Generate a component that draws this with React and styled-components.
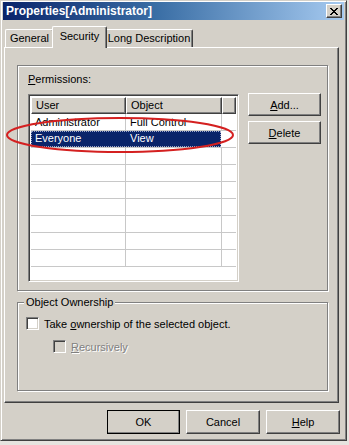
import styled, { createGlobalStyle } from 'styled-components';

const GlobalStyle = createGlobalStyle`
    html, body {
        margin: 0;
        padding: 0;
        background: #e6e4df;
    }
    * {
        box-sizing: border-box;
    }
`;

const FACE = '#d4d0c8';
const SHADOW = '#808080';
const DARK = '#404040';

const raised = `
    border-top: 1px solid #fff;
    border-left: 1px solid #fff;
    border-right: 1px solid ${DARK};
    border-bottom: 1px solid ${DARK};
    box-shadow: inset -1px -1px ${SHADOW};
`;

const sunken = `
    border-top: 1px solid ${SHADOW};
    border-left: 1px solid ${SHADOW};
    border-right: 1px solid #fff;
    border-bottom: 1px solid #fff;
    box-shadow: inset 1px 1px ${DARK}, inset -1px -1px ${FACE};
`;

const Window = styled.div`
    position: relative;
    width: 347px;
    height: 441px;
    background: ${FACE};
    border-top: 1px solid ${FACE};
    border-left: 1px solid ${FACE};
    border-right: 1px solid ${DARK};
    border-bottom: 1px solid ${DARK};
    box-shadow: inset 1px 1px #fff, inset -1px -1px ${SHADOW};
    padding: 1px 2px 2px 2px;
    font-family: 'Liberation Sans', Arial, sans-serif;
    font-size: 11px;
    color: #000;
    display: flex;
    flex-direction: column;
`;

const TitleBar = styled.div`
    height: 18px;
    display: flex;
    align-items: center;
    justify-content: space-between;
    padding: 0 2px 0 3px;
    background: linear-gradient(to right, #0a246a 0%, #3a6ea5 45%, #a6caf0 100%);
    color: #fff;
    font-weight: bold;
    font-size: 12px;
`;

const CloseButton = styled.div`
    width: 16px;
    height: 14px;
    background: ${FACE};
    ${raised}
    display: flex;
    align-items: center;
    justify-content: center;
`;

const TabStrip = styled.div`
    display: flex;
    align-items: flex-end;
    height: 27px;
    padding-left: 2px;
    position: relative;
    z-index: 1;
`;

const Tab = styled.div`
    width: ${(p) => p.$w}px;
    height: ${(p) => (p.$active ? 22 : 18)}px;
    margin: ${(p) => (p.$active ? '0 -2px -1px -2px' : '0')};
    padding-top: ${(p) => (p.$active ? 3 : 2)}px;
    text-align: center;
    background: ${FACE};
    border-top: 1px solid #fff;
    border-left: 1px solid #fff;
    border-right: 1px solid ${DARK};
    border-radius: 2px 2px 0 0;
    box-shadow: inset -1px 0 ${SHADOW};
    position: relative;
    z-index: ${(p) => (p.$active ? 2 : 0)};
`;

const TabPanel = styled.div`
    width: 335px;
    height: 356px;
    margin-left: 1px;
    border-top: 1px solid #fff;
    border-left: 1px solid #fff;
    border-right: 1px solid ${DARK};
    border-bottom: 1px solid ${DARK};
    box-shadow: inset -1px -1px ${SHADOW};
    padding: 17px 10px 0 12px;
    display: flex;
    flex-direction: column;
    gap: 11px;
`;

const GroupBox = styled.div`
    position: relative;
    height: ${(p) => p.$h}px;
    border: 1px solid ${SHADOW};
    box-shadow: inset 1px 1px #fff, 1px 1px #fff;
    padding: ${(p) => p.$pad};
`;

const Legend = styled.span`
    position: absolute;
    top: -7px;
    left: 6px;
    padding: 0 2px;
    background: ${FACE};
`;

const PermRow = styled.div`
    display: flex;
    align-items: flex-start;
    gap: 9px;
`;

const PermLabel = styled.div`
    height: 14px;
    margin-bottom: 7px;
`;

const ListView = styled.div`
    width: 211px;
    height: 188px;
    background: #fff;
    ${sunken}
    padding: 2px;
    overflow: hidden;
`;

const HeaderRow = styled.div`
    display: flex;
    height: 17px;
`;

const HeaderCell = styled.div`
    width: ${(p) => p.$w}px;
    flex: ${(p) => (p.$fill ? 1 : 'none')};
    background: ${FACE};
    ${raised}
    padding: 1px 0 0 4px;
`;

const Row = styled.div`
    display: flex;
    height: 17px;
    border-bottom: 1px solid #c8c8c8;
`;

const Cell = styled.div`
    width: ${(p) => p.$w}px;
    flex: ${(p) => (p.$fill ? 1 : 'none')};
    border-right: 1px solid #c8c8c8;
    padding: 2px 0 0 4px;
    white-space: nowrap;
    overflow: hidden;
`;

const Selection = styled.div`
    display: flex;
    width: 190px;
    height: 16px;
    background: #0a246a;
    color: #fff;
    outline: 1px dotted #a0a8c8;
    outline-offset: -1px;
`;

const SelCell = styled.div`
    width: ${(p) => p.$w}px;
    padding: 1px 0 0 4px;
`;

const ButtonColumn = styled.div`
    display: flex;
    flex-direction: column;
    gap: 5px;
    margin-top: -1px;
`;

const Button = styled.div`
    width: ${(p) => p.$w}px;
    height: ${(p) => p.$h || 23}px;
    background: ${FACE};
    ${raised}
    display: flex;
    align-items: center;
    justify-content: center;
    ${(p) =>
        p.$default &&
        `outline: 1px solid #000; outline-offset: -1px; border-color: #fff ${DARK} ${DARK} #fff;`}
`;

const U = styled.span`
    text-decoration: underline;
`;

const CheckRow = styled.div`
    display: flex;
    align-items: center;
    gap: 5px;
    margin-left: ${(p) => p.$indent}px;
    color: ${(p) => (p.$disabled ? SHADOW : '#000')};
    text-shadow: ${(p) => (p.$disabled ? '1px 1px #fff' : 'none')};
    height: 13px;
    margin-bottom: 10px;
`;

const CheckBox = styled.div`
    width: 13px;
    height: 13px;
    background: ${(p) => (p.$disabled ? FACE : '#fff')};
    ${sunken}
`;

const Footer = styled.div`
    display: flex;
    justify-content: flex-end;
    gap: 6px;
    padding: 7px 4px 0 0;
`;

const Annotation = styled.svg`
    position: absolute;
    left: 3px;
    top: 114px;
    pointer-events: none;
`;

const rows = [
    ['Administrator', 'Full Control'],
    ['Everyone', 'View'],
    ['', ''],
    ['', ''],
    ['', ''],
    ['', ''],
    ['', ''],
    ['', ''],
    ['', ''],
];

function App() {
    return (
        <>
            <GlobalStyle />
            <Window>
                <TitleBar>
                    <span>Properties[Administrator]</span>
                    <CloseButton>
                        <svg width='8' height='7' viewBox='0 0 8 7'>
                            <path d='M0 0 L7 7 M1 0 L8 7 M7 0 L0 7 M8 0 L1 7' stroke='#000' strokeWidth='1' />
                        </svg>
                    </CloseButton>
                </TitleBar>
                <TabStrip>
                    <Tab $w={49}>General</Tab>
                    <Tab $w={55} $active>Security</Tab>
                    <Tab $w={88}>Long Description</Tab>
                </TabStrip>
                <TabPanel>
                    <GroupBox $h={226} $pad='7px 0 0 10px'>
                        <PermLabel>
                            <U>P</U>ermissions:
                        </PermLabel>
                        <PermRow>
                            <ListView>
                                <HeaderRow>
                                    <HeaderCell $w={95}>User</HeaderCell>
                                    <HeaderCell $w={96}>Object</HeaderCell>
                                    <HeaderCell $fill>&nbsp;</HeaderCell>
                                </HeaderRow>
                                {rows.map(([user, obj], i) => (
                                    <Row key={i}>
                                        {user === 'Everyone' ? (
                                            <Selection>
                                                <SelCell $w={95}>{user}</SelCell>
                                                <SelCell $w={95}>{obj}</SelCell>
                                            </Selection>
                                        ) : (
                                            <>
                                                <Cell $w={95}>{user}</Cell>
                                                <Cell $w={96}>{obj}</Cell>
                                            </>
                                        )}
                                    </Row>
                                ))}
                            </ListView>
                            <ButtonColumn>
                                <Button $w={73}>
                                    <span>
                                        <U>A</U>dd...
                                    </span>
                                </Button>
                                <Button $w={73}>
                                    <span>
                                        <U>D</U>elete
                                    </span>
                                </Button>
                            </ButtonColumn>
                        </PermRow>
                    </GroupBox>
                    <GroupBox $h={89} $pad='14px 0 0 8px'>
                        <Legend>Object Ownership</Legend>
                        <CheckRow $indent={0}>
                            <CheckBox />
                            <span>
                                Take <U>o</U>wnership of the selected object.
                            </span>
                        </CheckRow>
                        <CheckRow $indent={27} $disabled>
                            <CheckBox $disabled />
                            <span>
                                <U>R</U>ecursively
                            </span>
                        </CheckRow>
                    </GroupBox>
                </TabPanel>
                <Footer>
                    <Button $w={73} $h={24} $default>OK</Button>
                    <Button $w={74} $h={24}>Cancel</Button>
                    <Button $w={74} $h={24}>
                        <span>
                            <U>H</U>elp
                        </span>
                    </Button>
                </Footer>
                <Annotation width='234' height='42' viewBox='0 0 234 42'>
                    <ellipse cx='116' cy='20' rx='113' ry='17' fill='none' stroke='#d42020' strokeWidth='2' />
                </Annotation>
            </Window>
        </>
    );
}

export default App;
